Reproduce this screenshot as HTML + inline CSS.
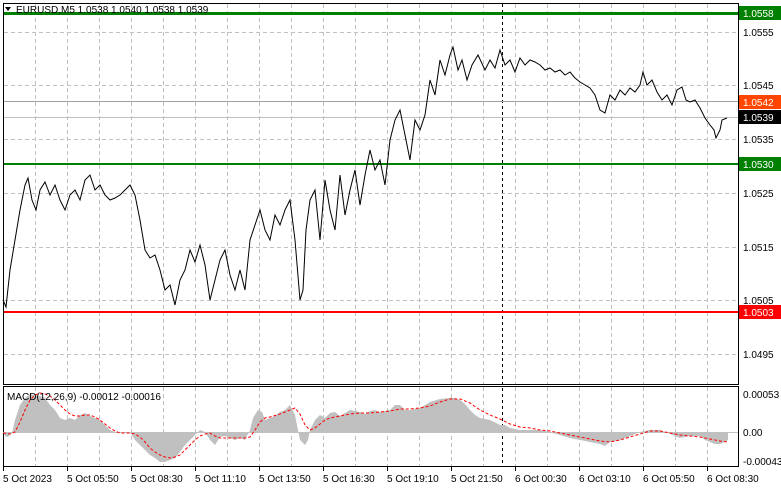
<!DOCTYPE html>
<html><head><style>
body{margin:0;background:#fff;width:781px;height:489px;overflow:hidden;font-family:"Liberation Sans",sans-serif;}
svg text{font-family:"Liberation Sans",sans-serif;font-size:10px;}
</style></head><body>
<svg width="781" height="489" viewBox="0 0 781 489" xmlns="http://www.w3.org/2000/svg">
<rect width="781" height="489" fill="#fff"/>
<g stroke="#c0c0c0" stroke-dasharray="4,3" stroke-width="1">
<path d="M35.5 4V384M67.5 4V384M99.5 4V384M131.5 4V384M163.5 4V384M195.5 4V384M227.5 4V384M259.5 4V384M291.5 4V384M323.5 4V384M355.5 4V384M387.5 4V384M419.5 4V384M451.5 4V384M483.5 4V384M515.5 4V384M547.5 4V384M579.5 4V384M611.5 4V384M643.5 4V384M675.5 4V384M707.5 4V384"/>
<path d="M35.5 387V466M67.5 387V466M99.5 387V466M131.5 387V466M163.5 387V466M195.5 387V466M227.5 387V466M259.5 387V466M291.5 387V466M323.5 387V466M355.5 387V466M387.5 387V466M419.5 387V466M451.5 387V466M483.5 387V466M515.5 387V466M547.5 387V466M579.5 387V466M611.5 387V466M643.5 387V466M675.5 387V466M707.5 387V466"/>
<path d="M4 32.5H738M4 85.5H738M4 139.5H738M4 193.5H738M4 247.5H738M4 300.5H738M4 354.5H738"/>
</g>
<rect x="3.5" y="3.5" width="735" height="381" fill="none" stroke="#000"/>
<rect x="3.5" y="386.5" width="735" height="80" fill="none" stroke="#000"/>
<line x1="502.5" y1="4" x2="502.5" y2="466" stroke="#000" stroke-dasharray="3,3"/>
<line x1="4" y1="101.5" x2="738" y2="101.5" stroke="#a0a0a0"/>
<line x1="4" y1="117.5" x2="738" y2="117.5" stroke="#c0c0c0"/>
<rect x="4" y="12" width="734" height="3" fill="#008000"/>
<rect x="4" y="163" width="734" height="2" fill="#008000"/>
<rect x="4" y="311" width="734" height="2" fill="#ff0000"/>
<polyline fill="none" stroke="#000" stroke-width="1" points="3,300 6,307 10,270 15,240 20,210 25,185 28,178 32,200 36,210 40,190 45,182 50,195 55,185 60,200 65,210 70,195 75,190 80,200 85,180 90,175 95,190 100,185 105,195 110,200 115,198 120,195 125,190 130,185 135,195 140,220 145,250 150,258 155,255 160,270 165,290 170,285 175,305 180,280 185,270 190,250 195,262 200,245 205,265 210,300 215,280 220,260 225,250 230,275 235,290 240,270 245,290 250,240 255,225 260,210 265,230 270,240 275,215 280,225 285,210 290,200 295,240 300,300 303,290 306,230 310,200 315,190 320,240 325,180 330,210 335,230 340,175 345,215 350,190 355,170 360,205 365,175 370,150 375,170 380,160 385,185 390,140 395,120 400,110 405,135 410,160 415,120 420,130 425,115 430,80 435,95 440,60 445,75 450,55 453,47 458,70 462,60 467,80 472,65 478,55 485,70 490,60 495,68 500,50 505,65 510,60 515,72 520,58 525,65 530,60 535,62 540,65 545,70 550,68 555,72 560,70 565,75 570,72 575,78 580,82 585,85 590,88 595,95 600,110 605,113 610,95 615,100 620,90 625,95 630,88 635,92 640,85 643,72 647,85 652,80 657,92 662,100 667,95 672,105 677,90 682,87 686,100 690,102 695,100 700,108 705,118 710,125 714,130 716,138 720,130 722,120 727,118"/>
<text x="16" y="13" fill="#000">EURUSD,M5  1.0538 1.0540 1.0538 1.0539</text>
<path d="M5 7L11 7L8 11Z" fill="#000"/>
<line x1="4" y1="432.5" x2="738" y2="432.5" stroke="#c0c0c0"/>
<polygon fill="#c0c0c0" points="3,432 5,436 8,437 12,433 15,420 20,405 25,398 30,394 35,395 40,396 45,398 50,405 55,410 60,418 65,420 70,418 75,420 80,415 85,413 90,416 95,418 100,420 105,425 110,430 115,432 120,432 130,432 135,440 140,445 145,450 150,455 155,458 160,462 165,462 170,460 175,458 180,452 185,445 190,440 195,435 200,430 205,432 210,440 215,445 220,437 225,436 230,438 235,440 240,438 245,440 250,430 253,418 258,410 262,412 265,420 270,418 275,416 280,412 285,410 290,405 295,415 300,440 305,445 308,440 310,430 315,420 320,415 325,418 330,413 335,412 340,416 345,413 350,410 360,412 365,414 370,411 375,410 380,412 390,410 395,405 400,405 405,410 410,410 420,408 425,405 430,402 440,399 450,398 455,398 460,400 465,404 470,410 475,415 480,418 490,420 500,425 505,425 510,428 520,430 530,430 540,430 550,432 560,435 570,438 580,440 590,442 600,444 605,446 610,442 620,440 630,436 640,432 650,430 660,430 670,434 680,438 690,436 700,436 705,440 710,442 715,444 720,444 725,442 728,440 728,432"/>
<polyline fill="none" stroke="#ff0000" stroke-dasharray="3,2" points="3,433 10,434 15,432 20,422 25,410 30,400 35,395 40,393 45,394 50,396 55,400 60,405 65,410 70,414 75,416 80,416 85,415 90,415 95,417 100,420 105,424 110,428 115,431 120,433 130,433 135,434 140,437 145,442 150,448 155,452 160,455 165,457 170,458 175,457 180,455 185,450 190,445 195,440 200,436 205,434 210,433 215,436 220,438 225,438 230,438 240,438 245,438 250,437 255,430 260,422 265,418 270,417 280,414 285,412 290,410 295,408 300,414 305,425 310,430 315,428 320,424 325,420 330,418 340,416 350,414 360,413 370,413 380,412 390,411 400,409 410,409 420,408 430,406 440,402 450,399 460,399 470,403 480,410 490,415 500,419 510,424 520,427 530,428 540,430 550,431 560,433 570,435 580,437 590,439 600,441 610,442 620,440 630,437 640,434 650,431 660,431 670,433 680,435 690,436 700,437 710,439 720,441 728,442"/>
<text x="7" y="400" fill="#000">MACD(12,26,9) -0.00012 -0.00016</text>
<g fill="#000">
<text x="743" y="36">1.0555</text>
<text x="743" y="89">1.0545</text>
<text x="743" y="143">1.0535</text>
<text x="743" y="197">1.0525</text>
<text x="743" y="251">1.0515</text>
<text x="743" y="304">1.0505</text>
<text x="743" y="358">1.0495</text>
<text x="743" y="398">0.00053</text>
<text x="743" y="436">0.00</text>
<text x="743" y="465">-0.00043</text>
</g>
<rect x="739" y="6" width="42" height="14" fill="#008000"/><text x="743" y="17" fill="#fff">1.0558</text>
<rect x="739" y="95" width="42" height="14" fill="#ff4500"/><text x="743" y="106" fill="#fff">1.0542</text>
<rect x="739" y="110" width="42" height="14" fill="#000"/><text x="743" y="121" fill="#fff">1.0539</text>
<rect x="739" y="157" width="42" height="14" fill="#008000"/><text x="743" y="168" fill="#fff">1.0530</text>
<rect x="739" y="305" width="42" height="14" fill="#ff0000"/><text x="743" y="316" fill="#fff">1.0503</text>
<g stroke="#000"><path d="M3.5 467V471M67.5 467V471M131.5 467V471M195.5 467V471M259.5 467V471M323.5 467V471M387.5 467V471M451.5 467V471M515.5 467V471M579.5 467V471M643.5 467V471M707.5 467V471"/></g>
<g fill="#000">
<text x="3" y="482">5 Oct 2023</text>
<text x="67" y="482">5 Oct 05:50</text>
<text x="131" y="482">5 Oct 08:30</text>
<text x="195" y="482">5 Oct 11:10</text>
<text x="259" y="482">5 Oct 13:50</text>
<text x="323" y="482">5 Oct 16:30</text>
<text x="387" y="482">5 Oct 19:10</text>
<text x="451" y="482">5 Oct 21:50</text>
<text x="515" y="482">6 Oct 00:30</text>
<text x="579" y="482">6 Oct 03:10</text>
<text x="643" y="482">6 Oct 05:50</text>
<text x="707" y="482">6 Oct 08:30</text>
</g>
</svg>
</body></html>
